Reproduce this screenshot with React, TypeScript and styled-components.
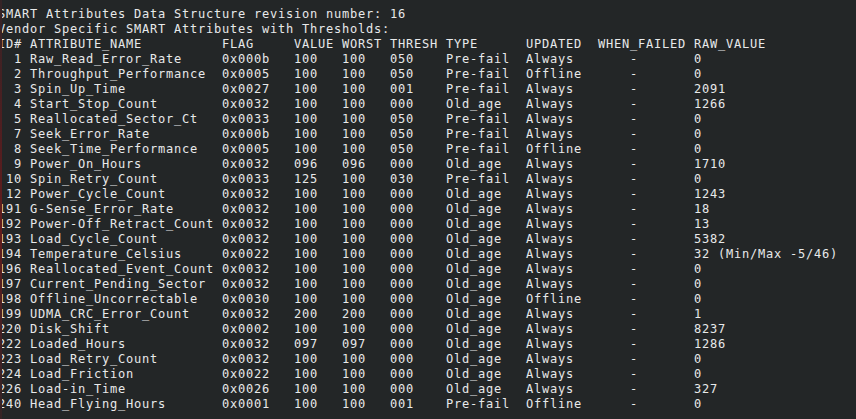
import React from "react";
import styled, { createGlobalStyle } from "styled-components";

const Global = createGlobalStyle`
  html, body {
    margin: 0;
    padding: 0;
    background: #232627;
  }
`;

const Screen = styled.div`
  position: relative;
  width: 856px;
  height: 419px;
  overflow: hidden;
  background: #232627;
  &::before {
    content: "";
    position: absolute;
    left: 0;
    top: 0;
    bottom: 0;
    width: 2px;
    background: linear-gradient(
      to bottom,
      #352426 0%,
      #521e20 35%,
      #631c1d 55%,
      #452124 80%,
      #352426 100%
    );
    z-index: 1;
  }
`;

const Output = styled.div`
  padding-top: 7px;
  margin-left: -2px;
  font-family: "DejaVu Sans Mono", monospace;
  font-size: 12px;
  letter-spacing: 0.775px;
  line-height: 15px;
  color: #e8e9ea;
`;

const Line = styled.div`
  white-space: pre;
  height: 15px;
`;

type Row = [number, string, string, string, string, string, string, string, string];

const rows: Row[] = [
  [1, "Raw_Read_Error_Rate", "0x000b", "100", "100", "050", "Pre-fail", "Always", "0"],
  [2, "Throughput_Performance", "0x0005", "100", "100", "050", "Pre-fail", "Offline", "0"],
  [3, "Spin_Up_Time", "0x0027", "100", "100", "001", "Pre-fail", "Always", "2091"],
  [4, "Start_Stop_Count", "0x0032", "100", "100", "000", "Old_age", "Always", "1266"],
  [5, "Reallocated_Sector_Ct", "0x0033", "100", "100", "050", "Pre-fail", "Always", "0"],
  [7, "Seek_Error_Rate", "0x000b", "100", "100", "050", "Pre-fail", "Always", "0"],
  [8, "Seek_Time_Performance", "0x0005", "100", "100", "050", "Pre-fail", "Offline", "0"],
  [9, "Power_On_Hours", "0x0032", "096", "096", "000", "Old_age", "Always", "1710"],
  [10, "Spin_Retry_Count", "0x0033", "125", "100", "030", "Pre-fail", "Always", "0"],
  [12, "Power_Cycle_Count", "0x0032", "100", "100", "000", "Old_age", "Always", "1243"],
  [191, "G-Sense_Error_Rate", "0x0032", "100", "100", "000", "Old_age", "Always", "18"],
  [192, "Power-Off_Retract_Count", "0x0032", "100", "100", "000", "Old_age", "Always", "13"],
  [193, "Load_Cycle_Count", "0x0032", "100", "100", "000", "Old_age", "Always", "5382"],
  [194, "Temperature_Celsius", "0x0022", "100", "100", "000", "Old_age", "Always", "32 (Min/Max -5/46)"],
  [196, "Reallocated_Event_Count", "0x0032", "100", "100", "000", "Old_age", "Always", "0"],
  [197, "Current_Pending_Sector", "0x0032", "100", "100", "000", "Old_age", "Always", "0"],
  [198, "Offline_Uncorrectable", "0x0030", "100", "100", "000", "Old_age", "Offline", "0"],
  [199, "UDMA_CRC_Error_Count", "0x0032", "200", "200", "000", "Old_age", "Always", "1"],
  [220, "Disk_Shift", "0x0002", "100", "100", "000", "Old_age", "Always", "8237"],
  [222, "Loaded_Hours", "0x0032", "097", "097", "000", "Old_age", "Always", "1286"],
  [223, "Load_Retry_Count", "0x0032", "100", "100", "000", "Old_age", "Always", "0"],
  [224, "Load_Friction", "0x0022", "100", "100", "000", "Old_age", "Always", "0"],
  [226, "Load-in_Time", "0x0026", "100", "100", "000", "Old_age", "Always", "327"],
  [240, "Head_Flying_Hours", "0x0001", "100", "100", "001", "Pre-fail", "Offline", "0"],
];

const formatRow = (r: Row): string => {
  const [id, name, flag, value, worst, thresh, type, updated, raw] = r;
  return (
    String(id).padStart(3, " ") +
    " " +
    name.padEnd(24, " ") +
    flag +
    "   " +
    value +
    "   " +
    worst +
    "   " +
    thresh +
    "    " +
    type.padEnd(10, " ") +
    updated.padEnd(9, " ") +
    "    -       " +
    raw
  );
};

const header =
  "ID# ATTRIBUTE_NAME          FLAG     VALUE WORST THRESH TYPE      UPDATED  WHEN_FAILED RAW_VALUE";

const lines: string[] = [
  "SMART Attributes Data Structure revision number: 16",
  "Vendor Specific SMART Attributes with Thresholds:",
  header,
  ...rows.map(formatRow),
];

export default function App() {
  return (
    <>
      <Global />
      <Screen>
        <Output>
          {lines.map((l, i) => (
            <Line key={i}>{l}</Line>
          ))}
        </Output>
      </Screen>
    </>
  );
}
